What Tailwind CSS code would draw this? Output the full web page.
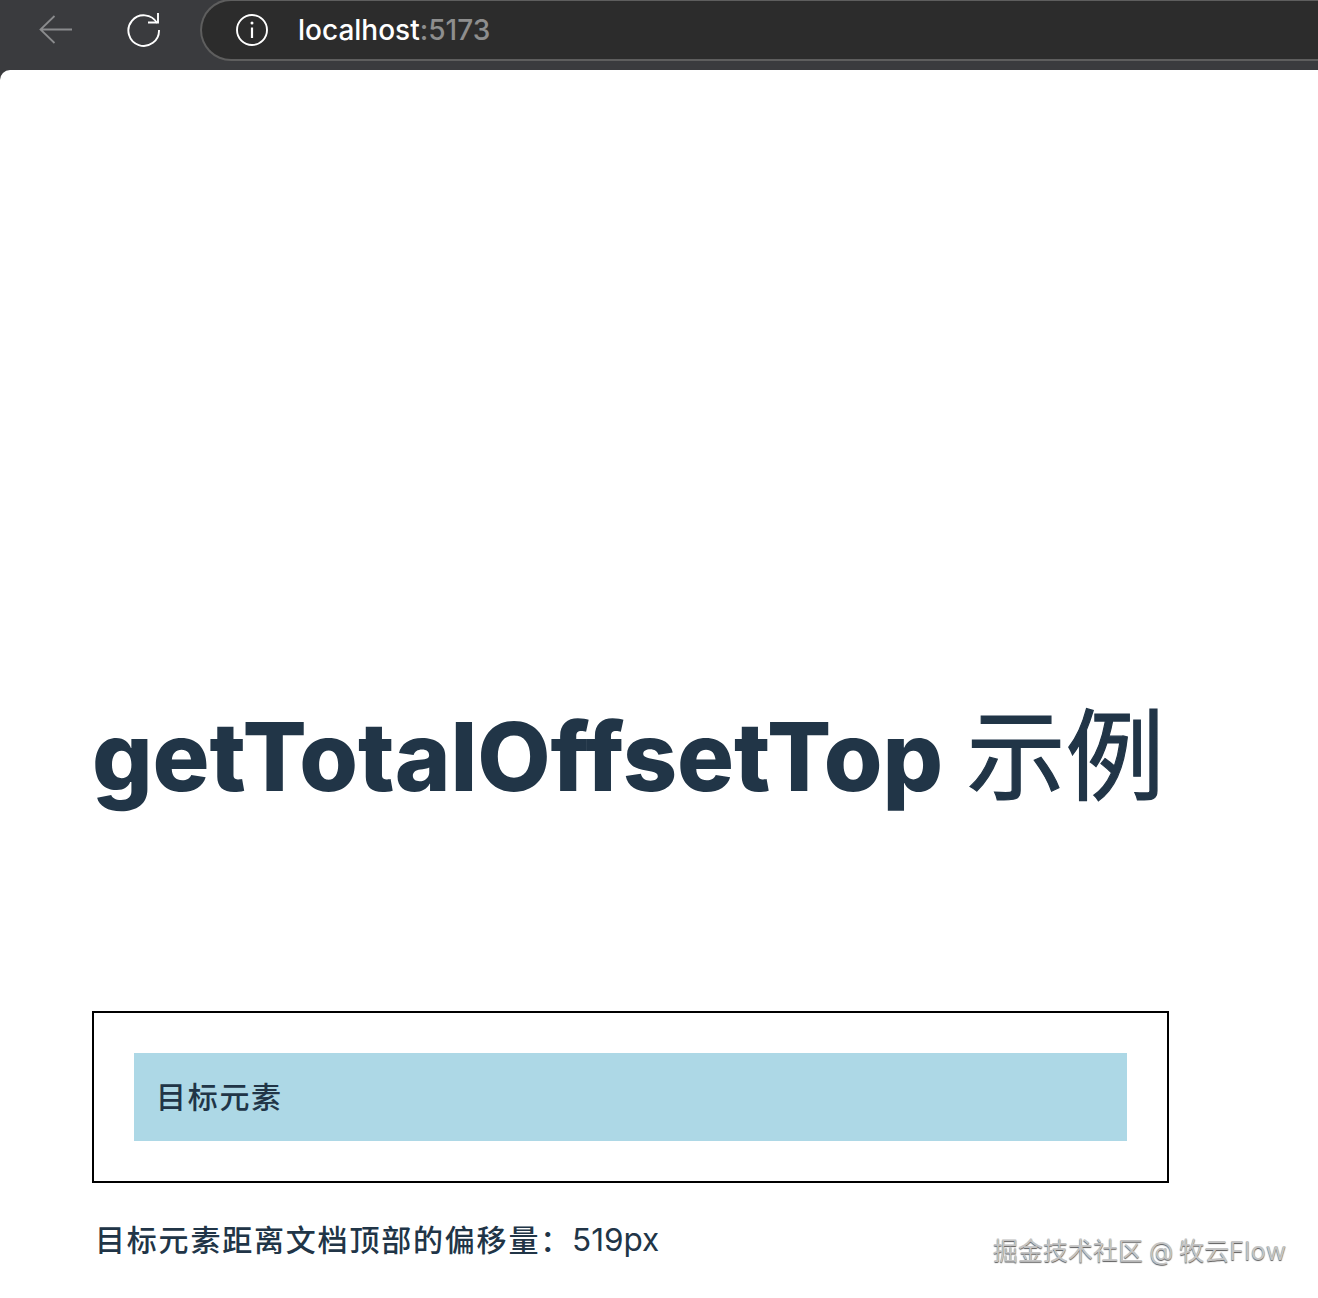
<!doctype html>
<html lang="zh-CN">
<head>
<meta charset="utf-8">
<title>getTotalOffsetTop</title>
<script src="https://cdn.jsdelivr.net/npm/@tailwindcss/browser@4"></script>
</head>
<body class="m-0 bg-[#3a3b3e] font-['Inter','Noto_Sans_CJK_SC',sans-serif] text-[#213547]">
<div class="relative w-[1318px] h-[1298px] overflow-hidden flex flex-col">
  <header class="relative h-[70px] shrink-0 bg-[#3a3b3e] flex items-start">
    <div class="w-[200px] h-[60px] shrink-0 flex items-center">
      <svg class="ml-[39px] w-[34px] h-[30px]" viewBox="0 0 34 30" fill="none" stroke="#8a8b8d" stroke-width="1.8"><path d="M33 14.5H2M15.5 1 1.5 14.5 15.5 28"/></svg>
      <svg class="ml-[54px] w-[36px] h-[36px]" viewBox="0 0 36 36" fill="none" stroke="#fff" stroke-width="1.9"><path d="M30 11A15.3 15.3 0 1 0 32 18"/><path d="M21 10.5H31V1"/></svg>
    </div>
    <div class="flex-1 h-[62px] -mt-px bg-[#2c2c2c] border-2 border-r-0 border-[#5e5e5e] rounded-l-[32px] flex items-center text-[28px] font-medium">
      <svg class="ml-[33px] w-[34px] h-[34px]" viewBox="0 0 34 34" fill="none" stroke="#fff" stroke-width="1.9"><circle cx="17" cy="17" r="15"/><path d="M17 14.5V25" stroke-width="2.2"/><circle cx="17" cy="10" r="1.5" fill="#fff" stroke="none"/></svg>
      <span class="ml-[29px] text-white">localhost<span class="text-[#8e8e8e]">:5173</span></span>
    </div>
  </header>
  <main class="flex-1 bg-white rounded-tl-[10px] pl-[92px] w-full">
    <h1 class="mt-[624px] h-[124px] w-[1180px] text-[95px] leading-[124px] font-extrabold tracking-[-0.1px] whitespace-nowrap">getTotalOffsetTop <span class="ml-[3px] text-[99px] font-normal tracking-normal align-[-1px] [-webkit-text-stroke:1.2px_#213547]">示例</span></h1>
    <div class="mt-[193px] w-[1077px] h-[172px] border-2 border-black p-10">
      <div class="h-[88px] bg-[#add8e6] pl-[22px] flex items-center text-[30px] font-medium tracking-[1.7px]">目标元素</div>
    </div>
    <p class="mt-[35px] pl-[3px] text-[30px] leading-[44px] font-medium tracking-[1.8px] whitespace-nowrap">目标元素距离文档顶部的偏移量：<span class="text-[31.5px] font-normal tracking-normal">519px</span></p>
  </main>
  <div class="absolute left-[993px] top-[1233px] text-[25px] leading-[36px] text-[#c4c4c4] whitespace-nowrap [text-shadow:0_1px_1px_#5a5a5a]">掘金技术社区<span class="tracking-[-0.7px]"> @ </span>牧云<span class="tracking-[0.4px]">Flow</span></div>
</div>
</body>
</html>
